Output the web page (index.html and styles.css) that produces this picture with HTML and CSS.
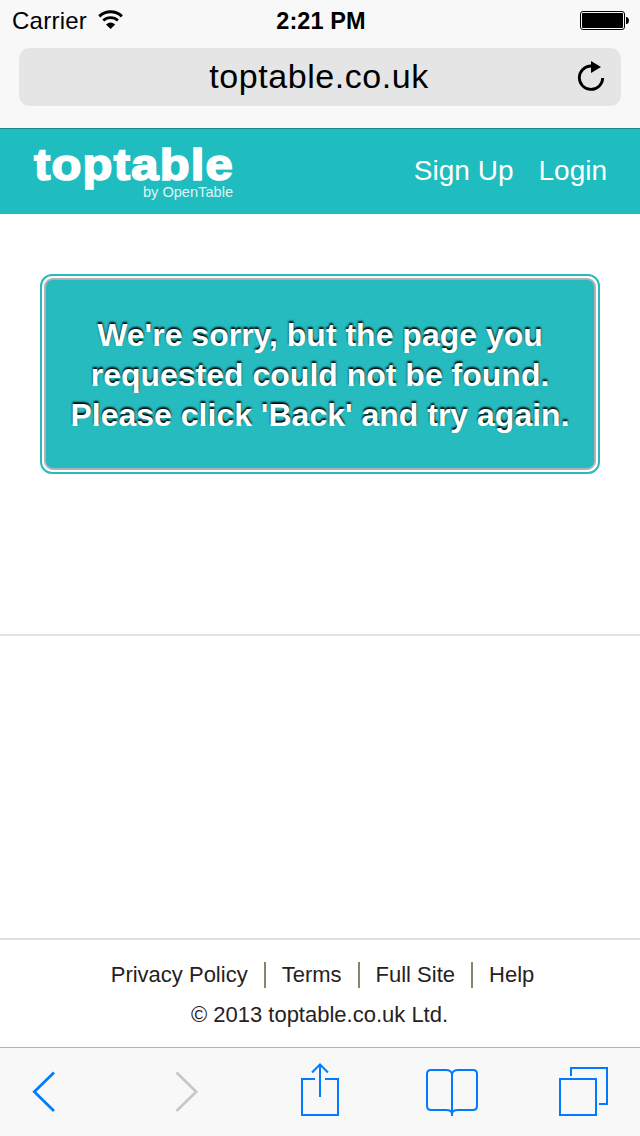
FILE: index.html
```html
<!DOCTYPE html>
<html lang="en">
<head>
<meta charset="utf-8">
<title>toptable</title>
<link rel="stylesheet" href="styles.css">
</head>
<body>
<div class="browser-top">
  <div class="status">
    <div class="status-left"><span class="carrier">Carrier</span>
      <svg class="wifi" width="26" height="20" viewBox="0 0 26 20"><g fill="none" stroke="#000"><path d="M1.300 6.300a16.500 16.500 0 0 1 22.600 0" stroke-width="3"/><path d="M5.300 10.500a10.800 10.800 0 0 1 14.600 0" stroke-width="2.700"/></g><path d="M8 14.400q4.600-4 9.200 0l-4.600 4.600z"/></svg>
    </div>
    <span class="clock">2:21 PM</span>
    <svg class="battery" width="50" height="20" viewBox="0 0 50 20"><rect x=".5" y=".5" width="44" height="18" rx="2.500" fill="none" stroke="#000"/><rect x="2" y="2" width="41" height="15" rx="1"/><path d="M46 6h1q2 1 2 3.500t-2 3.500h-1z"/></svg>
  </div>
  <div class="address"><span class="url">toptable.co.uk</span>
    <svg class="reload" width="30" height="34" viewBox="0 0 30 34"><path d="M14 5A11.700 11.700 0 1 0 25.700 17" fill="none" stroke="#000" stroke-width="2.800"/><path d="M14 0v12l10-6z"/></svg>
  </div>
</div>
<header class="header">
  <div class="logo"><div class="logo-name">toptable</div><div class="logo-by">by OpenTable</div></div>
  <nav class="account"><a>Sign Up</a><a>Login</a></nav>
</header>
<main class="main">
  <div class="message"><p class="message-text"><span class="line">We're sorry, but the page you</span><span class="line">requested could not be found.</span><span class="line">Please click 'Back' and try again.</span></p></div>
</main>
<section class="blank"></section>
<footer class="footer">
  <nav class="links"><a>Privacy Policy</a><a>Terms</a><a>Full Site</a><a>Help</a></nav>
  <p class="copyright">© 2013 toptable.co.uk Ltd.</p>
</footer>
<div class="toolbar">
  <svg width="640" height="88" viewBox="0 0 640 88" fill="none" stroke="#007aff" stroke-width="2">
    <path d="M54 24.500L34.300 43.700 54 63" stroke-width="2.700"/>
    <path d="M176.500 24.500L196.200 43.700 176.500 63" stroke="#c7c7c7" stroke-width="2.700"/>
    <path d="M315 31H302V67H338V31H325M320 49V17M312 24.500l8-8 8 8"/>
    <path d="M452 68V26M452 26q-1-4-6-4H431q-4 0-4 4V58q0 4 4 4h15q6 0 6 4 0-4 6-4h15q4 0 4-4V26q0-4-4-4H458q-5 0-6 4"/>
    <path d="M560 31h36v36h-36zM571 28v-8h36v36h-8"/>
  </svg>
</div>
</body>
</html>
```
FILE: styles.css
```css
* { box-sizing: border-box; }
body {
  margin: 0;
  width: 640px;
  height: 1136px;
  display: flex;
  flex-direction: column;
  overflow: hidden;
  background: #fff;
  color: #000;
  font-family: "Liberation Sans", Arial, sans-serif;
}
p { margin: 0; }
svg { display: block; }
.browser-top {
  height: 128px;
  padding: 0 19px;
  background: #f8f8f8;
}
.status {
  height: 48px;
  margin: 0 -9px 0 -7px;
  display: grid;
  grid-template-columns: 1fr auto 1fr;
  font-size: 24px;
  line-height: 42px;
}
.status-left { display: flex; }
.carrier { letter-spacing: .25px; }
.wifi { margin: 10px 0 0 10.700px; }
.clock {
  font-weight: 700;
  font-size: 23.500px;
  letter-spacing: .1px;
}
.battery { margin-top: 11px; justify-self: end; }
.address {
  height: 58px;
  border-radius: 11px;
  background: #e5e5e5;
  display: grid;
  grid-template-columns: 1fr auto 1fr;
}
.url {
  grid-column: 2;
  padding-right: 2px;
  font-size: 34px;
  line-height: 57px;
  letter-spacing: .55px;
}
.reload { justify-self: end; margin: 13px 14px 0 0; }
.header {
  height: 86px;
  border-top: 1px solid #16888b;
  background: #1fbcc0;
  color: #fff;
  display: flex;
  justify-content: space-between;
  padding: 0 33px 0 34px;
}
.logo { width: 201px; padding-top: 10px; }
.logo-name {
  height: 45px;
  font-size: 44.500px;
  line-height: 51px;
  font-weight: 700;
  letter-spacing: 1.100px;
  -webkit-text-stroke: 1.700px #fff;
  transform: scaleX(1.1);
  transform-origin: left;
}
.logo-by {
  width: 199px;
  text-align: right;
  font-size: 14.600px;
  line-height: 17px;
  opacity: .85;
}
.account {
  display: flex;
  gap: 25px;
  font-size: 28px;
  line-height: 83px;
}
.main {
  height: 422px;
  padding: 60px 40px 0;
  border-bottom: 2px solid #e2e2e2;
}
.message {
  height: 200px;
  border: 2px solid #26bbbe;
  border-radius: 12px;
  padding: 2px;
}
.message-text {
  height: 192px;
  border: 2px solid #b1b1b1;
  border-radius: 9px;
  background: #26bbbe;
  padding-top: 35px;
  color: #fff;
  font-size: 32px;
  line-height: 40px;
  font-weight: 700;
  text-align: center;
  text-shadow: 0 -2px 2px #000;
}
.line { display: block; white-space: nowrap; }
.blank { height: 302px; }
.footer {
  height: 109px;
  padding-top: 15px;
  border-top: 2px solid #e4e0de;
  color: #262223;
  font-size: 22px;
  line-height: 40px;
  text-align: center;
}
.copyright { padding-right: 1px; }
.links {
  display: flex;
  justify-content: center;
  align-items: center;
  height: 40px;
  padding-left: 5px;
}
.links a { line-height: 26px; }
.links a + a {
  margin-left: 16px;
  padding-left: 16px;
  border-left: 2px solid #8a8272;
}
.toolbar {
  height: 89px;
  border-top: 1px solid #b2b2b2;
  background: #f8f8f8;
}
```
